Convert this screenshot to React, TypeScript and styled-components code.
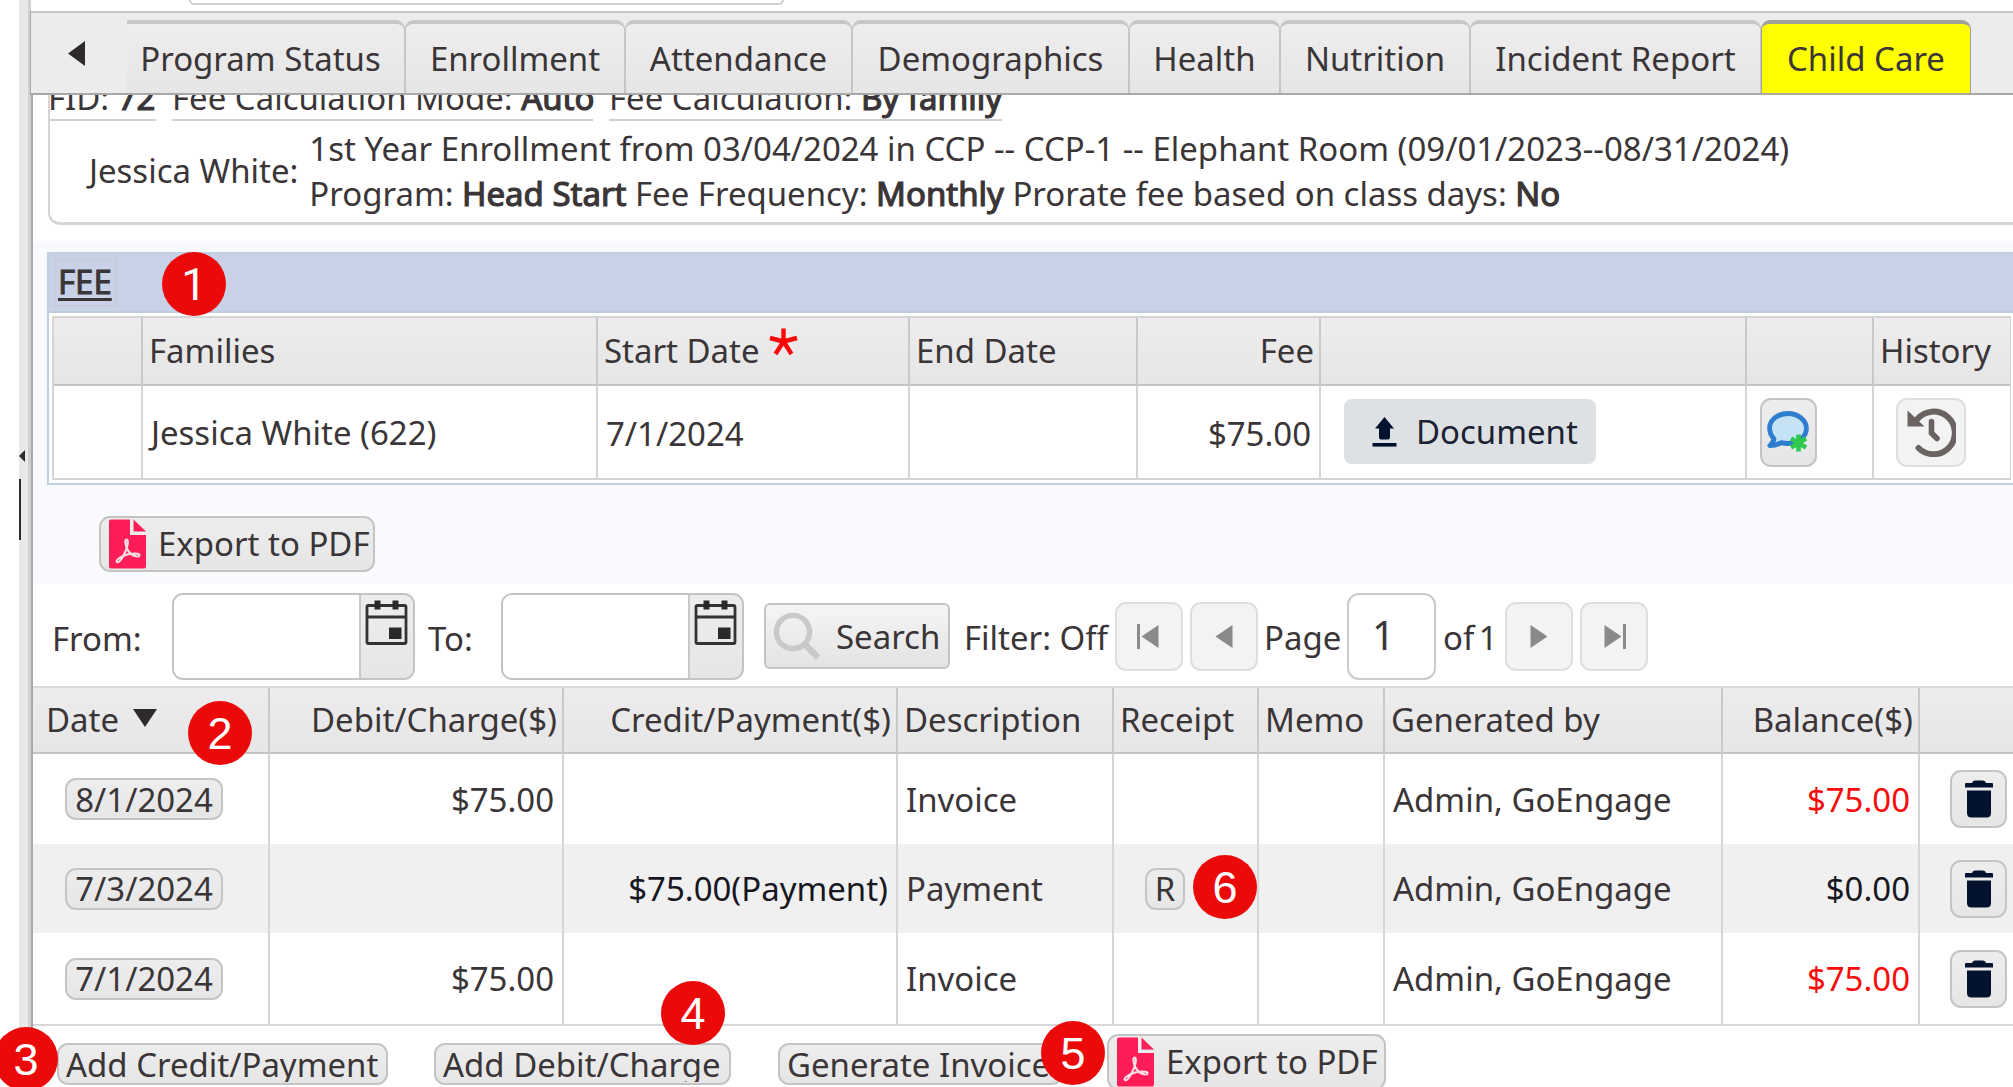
import React from "react";
import styled, { createGlobalStyle, css } from "styled-components";

const GlobalStyle = createGlobalStyle`
  *, *::before, *::after { box-sizing: border-box; }
  body {
    margin: 0;
    background: #fff;
    color: #3a3537;
    font-family: "Noto Sans", "Open Sans", sans-serif;
    font-size: 32.96px;
    line-height: 45px;
    overflow: hidden;
  }
`;

const control = css`
  border: 2px solid #c4c4c4;
  border-radius: 11px;
  background: linear-gradient(#eeeded, #e6e6e6);
`;

const Page = styled.div`
  position: relative;
  display: flex;
  width: 2013px;
  height: 1087px;
  overflow: hidden;
  white-space: nowrap;
`;

/* ---- splitter on the left ---- */
const Splitter = styled.div`
  flex: none;
  width: 12px;
  margin-left: 19px;
  background: #e8e8e8;
  border-right: 3px solid #d0d0d0;
  padding-top: 450px;
`;
const SplitterArrow = styled.div`
  width: 0;
  border: solid transparent;
  border-width: 6px 6px 6px 0;
  border-right-color: #2e2a2b;
`;
const SplitterGrip = styled.div`
  width: 2px;
  height: 61px;
  margin-top: 17px;
  background: #2e2a2b;
`;

const Main = styled.main`
  flex: 1;
  min-width: 0;
  display: flex;
  flex-direction: column;
`;
const TopStrip = styled.div`
  height: 11px;
  flex: none;
  padding-left: 158px;
`;
const TopField = styled.div`
  width: 595px;
  height: 5px;
  border: 2px solid #cfcfcf;
  border-top: 0;
  border-radius: 0 0 9px 9px;
`;

/* ---- tabs ---- */
const TabBar = styled.nav`
  flex: none;
  display: flex;
  height: 84px;
  padding: 7px 0 0 37px;
  margin-left: -1px;
  border: solid #a8a8a8;
  border-width: 0 0 2px 1px;
  box-shadow: inset 0 2px #c6c6c6;
  background: #ececec;
`;
const TabScroll = styled.div`
  flex: none;
  width: 59px;
  padding-top: 23px;
`;
const Triangle = styled.svg`
  display: block;
  flex: none;
`;
const Tab = styled.div<{ $w: number; $active?: boolean; $first?: boolean }>`
  flex: none;
  width: ${(p) => p.$w}px;
  margin-top: 2px;
  padding-top: 12px;
  padding-right: ${(p) => (p.$first ? 10 : 0)}px;
  text-align: center;
  border: 1px solid ${(p) => (p.$active ? "#a3a3a3" : "#c6c6c6")};
  border-top: 4px solid ${(p) => (p.$active ? "#a39f9b" : "#c6c6c6")};
  border-bottom: 0;
  border-left-width: ${(p) => (p.$first ? 0 : 1)}px;
  border-radius: ${(p) => (p.$first ? "0 9px 0 0" : "9px 9px 0 0")};
  background: ${(p) => (p.$active ? "#ffff00" : "linear-gradient(#efeded, #e6e6e6)")};
`;

/* ---- scrolled body ---- */
const Body = styled.div`
  flex: 1;
  min-height: 0;
  overflow: hidden;
  border-left: 2px solid #a8a8a8;
`;
const FamilyBox = styled.section`
  height: 130px;
  margin-left: 15px;
  border: solid #d6d6d6;
  border-width: 0 0 3px 2px;
  border-radius: 0 0 0 12px;
`;
const Facts = styled.div`
  display: flex;
  gap: 16px;
  height: 26px;
  margin-left: -2px;
`;
const Fact = styled.div<{ $w: number }>`
  width: ${(p) => p.$w}px;
  height: 46px;
  margin-top: -20px;
  border-bottom: 2px solid #d0d0d0;
  line-height: 46px;
`;
const B = styled.span`
  -webkit-text-stroke: 1.2px currentColor;
`;
const Enrollment = styled.div`
  display: flex;
  align-items: center;
  height: 98px;
  padding-left: 39px;
  gap: 11px;
`;
const EnrollmentLines = styled.div`
  line-height: 44.5px;
  padding-top: 3px;
`;

const FeeArea = styled.section`
  height: 343px;
  margin-top: 16px;
  padding: 11px 0 0 14px;
  background: #f8fafd;
`;
const FeePanel = styled.div`
  height: 233px;
  border: solid #bfd0e2;
  border-width: 2px 0 2px 2px;
  background: #fff;
`;
const FeeTitleBar = styled.header`
  height: 59px;
  padding: 5px;
  background: #c9d1e6;
  border-bottom: 2px solid #bccde0;
`;
const FeeTitle = styled.div`
  width: 62px;
  height: 47px;
  padding-left: 3px;
  border: 1px dotted #c3c3c3;
  text-decoration: underline;
  text-decoration-thickness: 3px;
  text-underline-offset: 4px;
  line-height: 44px;
  -webkit-text-stroke: 1px currentColor;
`;
const FeeTable = styled.div`
  display: grid;
  grid-template-columns: 89px 455px 312px 228px 183px 426px 127px 136px;
  grid-template-rows: 68px 92px;
  width: 1959px;
  margin: 3px 0 0 3px;
  border: 2px solid #d4d4d4;
  border-right-width: 1px;
`;
const HeadCell = styled.div<{ $right?: boolean; $last?: boolean }>`
  display: flex;
  align-items: center;
  justify-content: ${(p) => (p.$right ? "flex-end" : "flex-start")};
  padding: 0 5px 1px 6px;
  border-right: ${(p) => (p.$last ? 0 : 2)}px solid #c9c9c9;
  border-bottom: 2px solid #c4c4c4;
  background: linear-gradient(#eeecec, #e6e6e6);
`;
const Cell = styled.div<{ $right?: boolean; $pad?: number; $last?: boolean; $tone?: string; $drop?: number }>`
  display: flex;
  align-items: center;
  justify-content: ${(p) => (p.$right ? "flex-end" : "flex-start")};
  padding-top: ${(p) => p.$drop ?? 0}px;
  padding-left: ${(p) => (p.$right ? 0 : p.$pad ?? 8)}px;
  padding-right: ${(p) => (p.$right ? p.$pad ?? 8 : 0)}px;
  border-right: ${(p) => (p.$last ? 0 : 2)}px solid #d6d6d6;
  color: ${(p) => p.$tone ?? "inherit"};
`;
const Star = styled.svg`
  margin: -17px 0 0 9px;
`;
const DocumentButton = styled.button`
  display: flex;
  align-items: center;
  width: 252px;
  height: 65px;
  margin-top: -1px;
  padding: 0 0 0 28px;
  gap: 19px;
  border: 0;
  border-radius: 8px;
  background: #dde1e4;
  color: #1b2233;
  font: inherit;
`;
const IconButton = styled.button<{ $w: number; $h: number; $soft?: boolean }>`
  ${control}
  display: flex;
  align-items: center;
  justify-content: center;
  width: ${(p) => p.$w}px;
  height: ${(p) => p.$h}px;
  padding: 0;
  ${(p) => p.$soft && css`border-color: #dedede; background: #f3f3f3;`}
`;
const ExportButton = styled.button<{ $w: number }>`
  ${control}
  display: flex;
  align-items: center;
  flex: none;
  width: ${(p) => p.$w}px;
  height: 56px;
  padding: 0 0 0 8px;
  gap: 12px;
  font: inherit;
  color: inherit;
`;
const ExportLabel = styled.span`
  padding-bottom: 2px;
`;
const FeeExport = styled.div`
  padding: 31px 0 0 52px;
`;

/* ---- ledger ---- */
const Toolbar = styled.div`
  display: flex;
  align-items: center;
  height: 102px;
  padding: 2px 0 0 18px;
`;
const Label = styled.span<{ $w: number; $drop?: number; $pad?: number }>`
  flex: none;
  width: ${(p) => p.$w}px;
  padding-left: ${(p) => p.$pad ?? 0}px;
  padding-top: ${(p) => p.$drop ?? 0}px;
`;
const DateField = styled.div`
  ${control}
  flex: none;
  display: flex;
  width: 243px;
  height: 87px;
  overflow: hidden;
`;
const DateInput = styled.div`
  width: 187px;
  background: #fff;
  border-right: 2px solid #c8c8c8;
`;
const CalendarIcon = styled.svg`
  margin: 5px 0 0 4px;
`;
const SearchButton = styled.button`
  ${control}
  flex: none;
  display: flex;
  align-items: center;
  width: 186px;
  height: 66px;
  margin-left: 20px;
  padding: 0 0 0 7px;
  gap: 14px;
  border-radius: 6px;
  background: linear-gradient(#f5f5f5, #e4e3e3);
  font: inherit;
  color: inherit;
`;
const Pager = styled.div`
  display: flex;
  align-items: center;
  padding-left: 14px;
`;
const PageInput = styled.div`
  width: 89px;
  height: 87px;
  padding-left: 23px;
  border: 2px solid #cacaca;
  border-radius: 12px;
  font-size: 40px;
  line-height: 80px;
`;
const PageTotal = styled.span`
  width: 69px;
  padding-left: 7px;
  padding-top: 2px;
  word-spacing: -4px;
`;
const PagerGroup = styled.div`
  display: flex;
  gap: 7px;
`;

const Ledger = styled.div`
  display: grid;
  grid-template-columns: 237px 294px 334px 216px 145px 126px 338px 197px 95px;
  border-top: 2px solid #dadada;
  border-bottom: 2px solid #d8d8d8;
`;
const Row = styled.div<{ $h: number; $shade?: boolean }>`
  display: grid;
  grid-template-columns: subgrid;
  grid-column: 1 / -1;
  height: ${(p) => p.$h}px;
  background: ${(p) => (p.$shade ? "#f0f0f0" : "#fff")};
`;
const SortArrow = styled(Triangle)`
  margin: -3px 0 0 12px;
`;
const Pill = styled.button<{ $w: number }>`
  ${control}
  flex: none;
  width: ${(p) => p.$w}px;
  height: 42px;
  padding: 0;
  font: inherit;
  line-height: 37px;
  color: inherit;
`;
const Actions = styled.footer`
  display: flex;
  padding: 8px 0 0 24px;
`;
const ActionButton = styled(Pill)<{ $gap: number }>`
  margin: 9px ${(p) => p.$gap}px 0 0;
  padding-left: 7px;
  text-align: left;
`;
const ClippedLabel = styled.span`
  display: block;
  height: 36px;
  overflow: hidden;
`;

const Marker = styled.div<{ $x: number; $y: number; $plain?: boolean }>`
  position: absolute;
  left: ${(p) => p.$x - 32}px;
  top: ${(p) => p.$y - 32}px;
  width: 64px;
  height: 64px;
  border-radius: 50%;
  background: #eb0a0a;
  color: #fff;
  font: 45px/66px ${(p) => (p.$plain ? "Roboto" : '"Liberation Sans"')}, Arial, sans-serif;
  text-align: center;
`;

const PdfIcon = () => (
  <svg width="37" height="50" viewBox="0 0 37 50">
    <path d="M2 0.5H21V16H37V47.5Q37 49.5 35 49.5H2Q0 49.5 0 47.5V2.5Q0 0.5 2 0.5Z" fill="#ff1d58" />
    <path d="M24.5 0.5L37 12.5H24.5Z" fill="#ff1d58" />
    <path
      d="M17.5 20.5C15.5 20.5 16.5 26 18 29.5C20 34 24 37 28 37.5C31 37.5 31.5 35.5 28.5 34.8C24 34.2 18 35 13 37.5C9 39.5 6.5 42 8 43C10 44 13 39.5 15 35.5C17 31.5 19 26 18.8 22.5C18.7 21 18.3 20.5 17.5 20.5Z"
      fill="none"
      stroke="#f6dfe4"
      strokeWidth="2.1"
    />
  </svg>
);

const ChatIcon = () => (
  <svg width="43" height="42" viewBox="0 0 43 42">
    <path
      d="M21 2.5C11 2.5 2.6 8.6 2.6 17C2.6 21.5 4.6 25.2 7 27.8C6.8 30.5 4.8 32.6 2.8 34.6C7.8 34.8 11.5 33.2 14.2 31.6C16.4 32.2 18.6 32.5 21 32.5C31 32.5 39.4 26 39.4 17.5C39.4 9 31 2.5 21 2.5Z"
      fill="#c6e3f6"
      stroke="#2f7dce"
      strokeWidth="4.8"
      strokeLinejoin="round"
    />
    <path d="M31.5 23.5V40.5M24 27.5L39 36.5M39 27.5L24 36.5" stroke="#2fc84f" strokeWidth="4.6" />
  </svg>
);

const HistoryIcon = () => (
  <svg width="49" height="50" viewBox="0 0 49 50">
    <path d="M10 12.5A21.3 21.3 0 1 1 11.5 41" fill="none" stroke="#6b6361" strokeWidth="6" strokeLinecap="round" />
    <path d="M0.5 3.5V19.5H17.5Z" fill="#6b6361" />
    <path d="M24.5 14.5V26L30 31.5" fill="none" stroke="#6b6361" strokeWidth="5.6" strokeLinecap="round" />
  </svg>
);

const UploadIcon = () => (
  <svg width="25" height="30" viewBox="0 0 25 30">
    <path d="M12.5 0L22 11.5H18V20Q18 22.5 16 22.5H9Q7 22.5 7 20V11.5H3Z" fill="#03122e" />
    <rect x="0.5" y="26" width="24" height="3.6" fill="#03122e" />
  </svg>
);

const Calendar = () => (
  <CalendarIcon width="43" height="46" viewBox="0 0 43 46">
    <rect x="2" y="5.5" width="39" height="38" rx="1.5" fill="none" stroke="#363234" strokeWidth="2.8" />
    <path d="M2 17H41" stroke="#363234" strokeWidth="2.8" />
    <path d="M12.5 0.5V9.5M30.5 0.5V9.5" stroke="#2b2829" strokeWidth="6" />
    <rect x="24" y="27.5" width="12.5" height="11.5" fill="#2b2829" />
  </CalendarIcon>
);

const Magnifier = () => (
  <svg width="49" height="49" viewBox="0 0 49 49">
    <circle cx="20" cy="20" r="16.6" fill="none" stroke="#c9c9c9" strokeWidth="5.4" />
    <path d="M32.5 33L45 45.5" stroke="#c9c9c9" strokeWidth="6.5" />
  </svg>
);

const TrashIcon = () => (
  <svg width="28" height="38" viewBox="0 0 28 38">
    <path d="M7 3Q7.5 0.5 10 0.5H18Q20.5 0.5 21 3H27Q28 3 28 4V7.5H0V4Q0 3 1 3Z" fill="#03122e" />
    <path d="M2 10.5H26V33Q26 37.5 21.5 37.5H6.5Q2 37.5 2 33Z" fill="#03122e" />
  </svg>
);

const PagerIcon = ({ flip, bar }: { flip?: boolean; bar?: boolean }) => (
  <Triangle width="24" height="25" viewBox="0 0 24 25">
    <g transform={flip ? "translate(24 0) scale(-1 1)" : undefined} fill="#8b898a">
      {bar && <rect x="0" y="0" width="3" height="25" />}
      <path d={bar ? "M4.5 12.5L21.5 1V24Z" : "M3.500 12.5L20.500 1V24Z"} />
    </g>
  </Triangle>
);

const tabs: { label: string; w: number }[] = [
  { label: "Program Status", w: 278 },
  { label: "Enrollment", w: 220 },
  { label: "Attendance", w: 227 },
  { label: "Demographics", w: 277 },
  { label: "Health", w: 151 },
  { label: "Nutrition", w: 190 },
  { label: "Incident Report", w: 291 },
  { label: "Child Care", w: 210 },
];

type Entry = {
  date: string;
  debit?: string;
  credit?: string;
  description: string;
  receipt?: string;
  balance: string;
  tone: string;
  height: number;
};

const entries: Entry[] = [
  { date: "8/1/2024", debit: "$75.00", description: "Invoice", balance: "$75.00", tone: "#f80c0c", height: 90 },
  { date: "7/3/2024", credit: "$75.00(Payment)", description: "Payment", receipt: "R", balance: "$0.00", tone: "#17181f", height: 89 },
  { date: "7/1/2024", debit: "$75.00", description: "Invoice", balance: "$75.00", tone: "#f80c0c", height: 91 },
];

const markers: [number, number, number][] = [
  [1, 194, 284],
  [2, 220, 733],
  [3, 26, 1059],
  [4, 693, 1013],
  [5, 1073, 1053],
  [6, 1225, 887],
];

export default function App() {
  return (
    <Page>
      <GlobalStyle />
      <Splitter>
        <SplitterArrow />
        <SplitterGrip />
      </Splitter>
      <Main>
        <TopStrip>
          <TopField />
        </TopStrip>
        <TabBar>
          <TabScroll>
            <Triangle width="17" height="25" viewBox="0 0 17 25">
              <path d="M0 12.5L17 0V25Z" fill="#2e2a2b" />
            </Triangle>
          </TabScroll>
          {tabs.map((t, i) => (
            <Tab key={t.label} $w={t.w} $first={i === 0} $active={i === tabs.length - 1}>
              {t.label}
            </Tab>
          ))}
        </TabBar>
        <Body>
          <FamilyBox>
            <Facts>
              <Fact $w={108}>FID: <B>72</B></Fact>
              <Fact $w={421}>Fee Calculation Mode: <B>Auto</B></Fact>
              <Fact $w={393}>Fee Calculation: <B>By family</B></Fact>
            </Facts>
            <Enrollment>
              <span>Jessica White:</span>
              <EnrollmentLines>
                <div>1st Year Enrollment from 03/04/2024 in CCP -- CCP-1 -- Elephant Room (09/01/2023--08/31/2024)</div>
                <div>
                  Program: <B>Head Start</B> Fee Frequency: <B>Monthly</B> Prorate fee based on class days: <B>No</B>
                </div>
              </EnrollmentLines>
            </Enrollment>
          </FamilyBox>

          <FeeArea>
            <FeePanel>
              <FeeTitleBar>
                <FeeTitle>FEE</FeeTitle>
              </FeeTitleBar>
              <FeeTable>
                <HeadCell />
                <HeadCell>Families</HeadCell>
                <HeadCell>
                  Start Date
                  <Star width="29" height="28" viewBox="0 0 29 28">
                    <path
                      d="M14.5 13.5V0.5M14.5 13.5L1 10M14.5 13.5L28 10M14.5 13.5L6.5 26M14.5 13.5L22.5 26"
                      stroke="#fb0606"
                      strokeWidth="4.4"
                    />
                  </Star>
                </HeadCell>
                <HeadCell>End Date</HeadCell>
                <HeadCell $right>Fee</HeadCell>
                <HeadCell />
                <HeadCell />
                <HeadCell $last>History</HeadCell>
                <Cell />
                <Cell>Jessica White (622)</Cell>
                <Cell $drop={3}>7/1/2024</Cell>
                <Cell />
                <Cell $right $drop={3}>$75.00</Cell>
                <Cell $pad={23}>
                  <DocumentButton>
                    <UploadIcon />
                    Document
                  </DocumentButton>
                </Cell>
                <Cell $pad={13}>
                  <IconButton $w={57} $h={69}>
                    <ChatIcon />
                  </IconButton>
                </Cell>
                <Cell $pad={22} $last>
                  <IconButton $w={70} $h={69} $soft>
                    <HistoryIcon />
                  </IconButton>
                </Cell>
              </FeeTable>
            </FeePanel>
            <FeeExport>
              <ExportButton $w={276}>
                <PdfIcon />
                <ExportLabel>Export to PDF</ExportLabel>
              </ExportButton>
            </FeeExport>
          </FeeArea>

          <Toolbar>
            <Label $w={121} $drop={5} $pad={1}>From:</Label>
            <DateField>
              <DateInput />
              <Calendar />
            </DateField>
            <Label $w={86} $drop={5} $pad={13}>To:</Label>
            <DateField>
              <DateInput />
              <Calendar />
            </DateField>
            <SearchButton>
              <Magnifier />
              Search
            </SearchButton>
            <Pager>
              <Label $w={151} $drop={3}>Filter: Off</Label>
              <PagerGroup>
                <IconButton $w={68} $h={69} $soft><PagerIcon bar /></IconButton>
                <IconButton $w={68} $h={69} $soft><PagerIcon /></IconButton>
              </PagerGroup>
              <Label $w={89} $drop={3} $pad={6}>Page</Label>
              <PageInput>1</PageInput>
              <PageTotal>of 1</PageTotal>
              <PagerGroup>
                <IconButton $w={68} $h={69} $soft><PagerIcon flip /></IconButton>
                <IconButton $w={68} $h={69} $soft><PagerIcon flip bar /></IconButton>
              </PagerGroup>
            </Pager>
          </Toolbar>

          <Ledger>
            <Row $h={66}>
              <HeadCell>
                <Label $w={82} $pad={7}>Date</Label>
                <SortArrow width="24" height="18" viewBox="0 0 24 18">
                  <path d="M0 0H24L12 18Z" fill="#2e2a2b" />
                </SortArrow>
              </HeadCell>
              <HeadCell $right>Debit/Charge($)</HeadCell>
              <HeadCell $right>Credit/Payment($)</HeadCell>
              <HeadCell>Description</HeadCell>
              <HeadCell>Receipt</HeadCell>
              <HeadCell>Memo</HeadCell>
              <HeadCell>Generated by</HeadCell>
              <HeadCell $right>Balance($)</HeadCell>
              <HeadCell $last />
            </Row>
            {entries.map((e, i) => (
              <Row key={e.date} $h={e.height} $shade={i % 2 === 1}>
                <Cell $pad={32}><Pill $w={158}>{e.date}</Pill></Cell>
                <Cell $right>{e.debit}</Cell>
                <Cell $right $tone="#17181f">{e.credit}</Cell>
                <Cell>{e.description}</Cell>
                <Cell $pad={31}>{e.receipt && <Pill $w={40}>{e.receipt}</Pill>}</Cell>
                <Cell />
                <Cell>Admin, GoEngage</Cell>
                <Cell $right $tone={e.tone}>{e.balance}</Cell>
                <Cell $pad={30} $last>
                  <IconButton $w={57} $h={58}><TrashIcon /></IconButton>
                </Cell>
              </Row>
            ))}
          </Ledger>

          <Actions>
            <ActionButton $w={331} $gap={46}><ClippedLabel>Add Credit/Payment</ClippedLabel></ActionButton>
            <ActionButton $w={297} $gap={47}><ClippedLabel>Add Debit/Charge</ClippedLabel></ActionButton>
            <ActionButton $w={285} $gap={44}><ClippedLabel>Generate Invoice</ClippedLabel></ActionButton>
            <ExportButton $w={279}>
              <PdfIcon />
              <ExportLabel>Export to PDF</ExportLabel>
            </ExportButton>
          </Actions>
        </Body>
      </Main>
      {markers.map(([n, x, y]) => (
        <Marker key={n} $x={x} $y={y} $plain={n === 1}>{n}</Marker>
      ))}
    </Page>
  );
}
